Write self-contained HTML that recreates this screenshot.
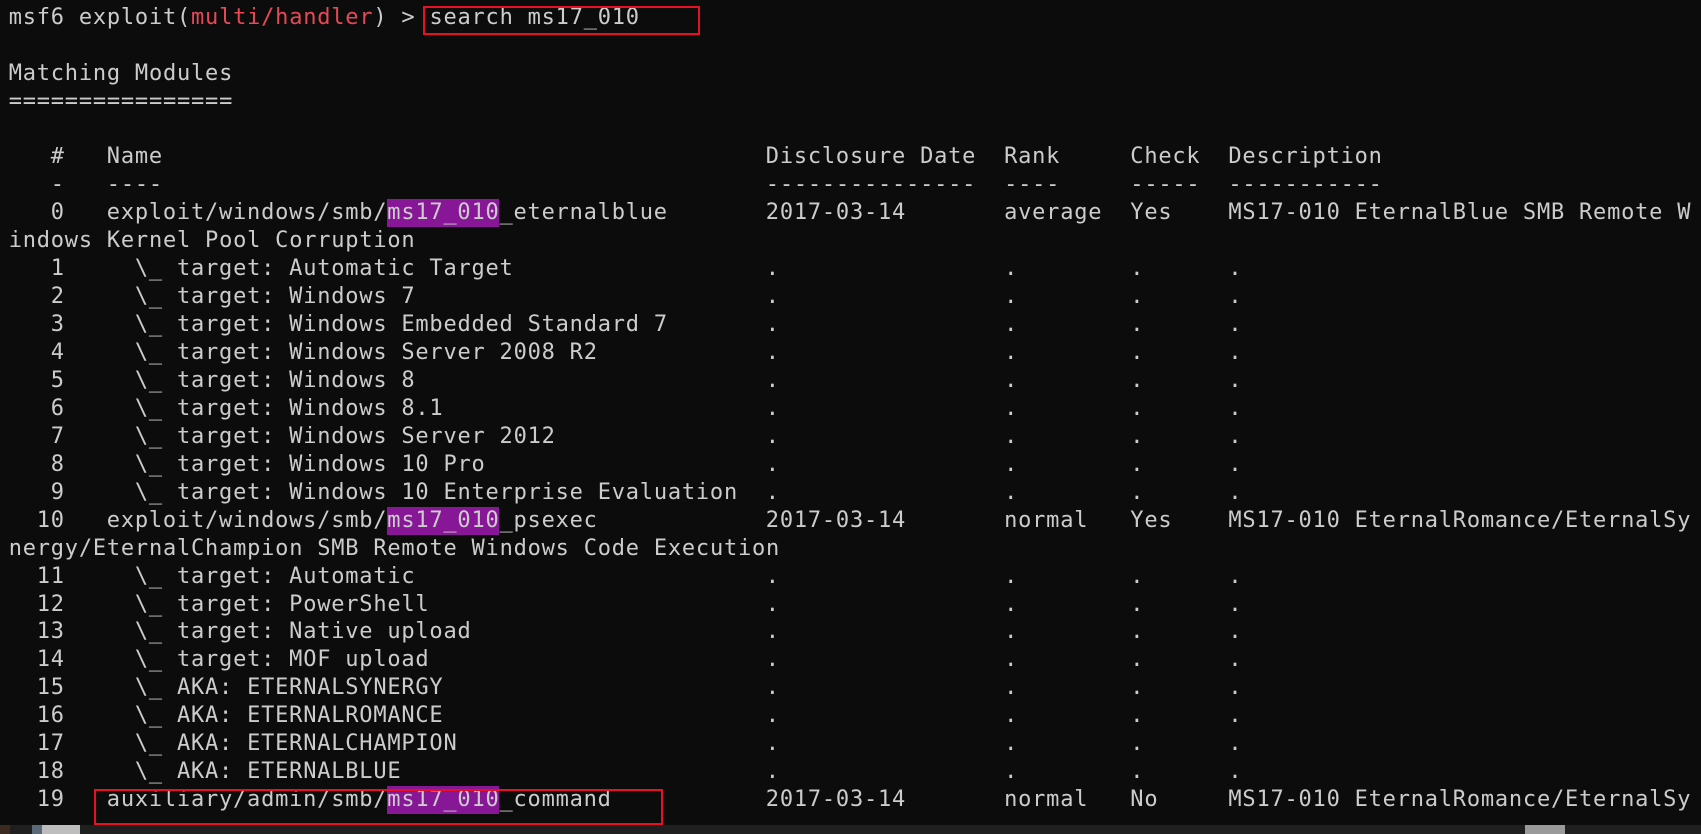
<!DOCTYPE html>
<html><head><meta charset="utf-8">
<style>
html,body{margin:0;padding:0;background:#0c0c0c;}
body{width:1701px;height:834px;position:relative;overflow:hidden;font-family:"DejaVu Sans Mono","Liberation Mono",monospace;font-size:22px;letter-spacing:0.78px;color:#cccccc;}
.l{position:absolute;left:0;height:28px;line-height:28px;width:1701px;white-space:pre;}
.l span{position:absolute;top:0;}
.x0{left:8.7px}.n1{left:50.8px}.n2{left:36.7px}.nm{left:106.8px}.tg{left:134.9px}
.d{left:765.8px}.r{left:1004.1px}.k{left:1130.3px}.s{left:1228.4px}
.hl{position:absolute;background:#881798;height:28px;width:112px;left:387.2px;}
.red{color:#e74856}
.box{position:absolute;border:2px solid #e81123;box-sizing:border-box;}
</style></head><body>
<div class="hl" style="top:199.3px"></div>
<div class="hl" style="top:506.6px"></div>
<div class="hl" style="top:786px"></div>

<div class="l" style="top:3.7px"><span class="x0">msf6 exploit(<b class="red" style="font-weight:normal">multi/handler</b>) &gt; search ms17_010</span></div>
<div class="l" style="top:59.6px"><span class="x0">Matching Modules</span></div>
<div class="l" style="top:87.5px"><span class="x0">================</span></div>
<div class="l" style="top:143.4px"><span class="n1">#</span><span class="nm">Name</span><span class="d">Disclosure Date</span><span class="r">Rank</span><span class="k">Check</span><span class="s">Description</span></div>
<div class="l" style="top:171.3px"><span class="n1">-</span><span class="nm">----</span><span class="d">---------------</span><span class="r">----</span><span class="k">-----</span><span class="s">-----------</span></div>
<div class="l" style="top:199.3px"><span class="n1">0</span><span class="nm">exploit/windows/smb/ms17_010_eternalblue</span><span class="d">2017-03-14</span><span class="r">average</span><span class="k">Yes</span><span class="s">MS17-010 EternalBlue SMB Remote W</span></div>
<div class="l" style="top:227.2px"><span class="x0">indows Kernel Pool Corruption</span></div>
<div class="l" style="top:255.2px"><span class="n1">1</span><span class="tg">\_ target: Automatic Target</span><span class="d">.</span><span class="r">.</span><span class="k">.</span><span class="s">.</span></div>
<div class="l" style="top:283.1px"><span class="n1">2</span><span class="tg">\_ target: Windows 7</span><span class="d">.</span><span class="r">.</span><span class="k">.</span><span class="s">.</span></div>
<div class="l" style="top:311.1px"><span class="n1">3</span><span class="tg">\_ target: Windows Embedded Standard 7</span><span class="d">.</span><span class="r">.</span><span class="k">.</span><span class="s">.</span></div>
<div class="l" style="top:339px"><span class="n1">4</span><span class="tg">\_ target: Windows Server 2008 R2</span><span class="d">.</span><span class="r">.</span><span class="k">.</span><span class="s">.</span></div>
<div class="l" style="top:366.9px"><span class="n1">5</span><span class="tg">\_ target: Windows 8</span><span class="d">.</span><span class="r">.</span><span class="k">.</span><span class="s">.</span></div>
<div class="l" style="top:394.9px"><span class="n1">6</span><span class="tg">\_ target: Windows 8.1</span><span class="d">.</span><span class="r">.</span><span class="k">.</span><span class="s">.</span></div>
<div class="l" style="top:422.8px"><span class="n1">7</span><span class="tg">\_ target: Windows Server 2012</span><span class="d">.</span><span class="r">.</span><span class="k">.</span><span class="s">.</span></div>
<div class="l" style="top:450.8px"><span class="n1">8</span><span class="tg">\_ target: Windows 10 Pro</span><span class="d">.</span><span class="r">.</span><span class="k">.</span><span class="s">.</span></div>
<div class="l" style="top:478.7px"><span class="n1">9</span><span class="tg">\_ target: Windows 10 Enterprise Evaluation</span><span class="d">.</span><span class="r">.</span><span class="k">.</span><span class="s">.</span></div>
<div class="l" style="top:506.6px"><span class="n2">10</span><span class="nm">exploit/windows/smb/ms17_010_psexec</span><span class="d">2017-03-14</span><span class="r">normal</span><span class="k">Yes</span><span class="s">MS17-010 EternalRomance/EternalSy</span></div>
<div class="l" style="top:534.6px"><span class="x0">nergy/EternalChampion SMB Remote Windows Code Execution</span></div>
<div class="l" style="top:562.5px"><span class="n2">11</span><span class="tg">\_ target: Automatic</span><span class="d">.</span><span class="r">.</span><span class="k">.</span><span class="s">.</span></div>
<div class="l" style="top:590.5px"><span class="n2">12</span><span class="tg">\_ target: PowerShell</span><span class="d">.</span><span class="r">.</span><span class="k">.</span><span class="s">.</span></div>
<div class="l" style="top:618.4px"><span class="n2">13</span><span class="tg">\_ target: Native upload</span><span class="d">.</span><span class="r">.</span><span class="k">.</span><span class="s">.</span></div>
<div class="l" style="top:646.4px"><span class="n2">14</span><span class="tg">\_ target: MOF upload</span><span class="d">.</span><span class="r">.</span><span class="k">.</span><span class="s">.</span></div>
<div class="l" style="top:674.3px"><span class="n2">15</span><span class="tg">\_ AKA: ETERNALSYNERGY</span><span class="d">.</span><span class="r">.</span><span class="k">.</span><span class="s">.</span></div>
<div class="l" style="top:702.2px"><span class="n2">16</span><span class="tg">\_ AKA: ETERNALROMANCE</span><span class="d">.</span><span class="r">.</span><span class="k">.</span><span class="s">.</span></div>
<div class="l" style="top:730.2px"><span class="n2">17</span><span class="tg">\_ AKA: ETERNALCHAMPION</span><span class="d">.</span><span class="r">.</span><span class="k">.</span><span class="s">.</span></div>
<div class="l" style="top:758.1px"><span class="n2">18</span><span class="tg">\_ AKA: ETERNALBLUE</span><span class="d">.</span><span class="r">.</span><span class="k">.</span><span class="s">.</span></div>
<div class="l" style="top:786px"><span class="n2">19</span><span class="nm">auxiliary/admin/smb/ms17_010_command</span><span class="d">2017-03-14</span><span class="r">normal</span><span class="k">No</span><span class="s">MS17-010 EternalRomance/EternalSy</span></div>

<div class="box" style="left:423px;top:6px;width:277px;height:29px"></div>
<div class="box" style="left:94px;top:789px;width:569px;height:36px"></div>

<div style="position:absolute;left:0;top:825px;width:1701px;height:9px;background:#1f1f1f"></div>
<div style="position:absolute;left:0;top:825px;width:10px;height:9px;background:#3b2a22"></div>
<div style="position:absolute;left:32px;top:825px;width:10px;height:9px;background:#5a6878"></div>
<div style="position:absolute;left:42px;top:825px;width:38px;height:9px;background:#bdbdbd"></div>
<div style="position:absolute;left:1525px;top:825px;width:40px;height:9px;background:#9a9a9a"></div>
</body></html>
